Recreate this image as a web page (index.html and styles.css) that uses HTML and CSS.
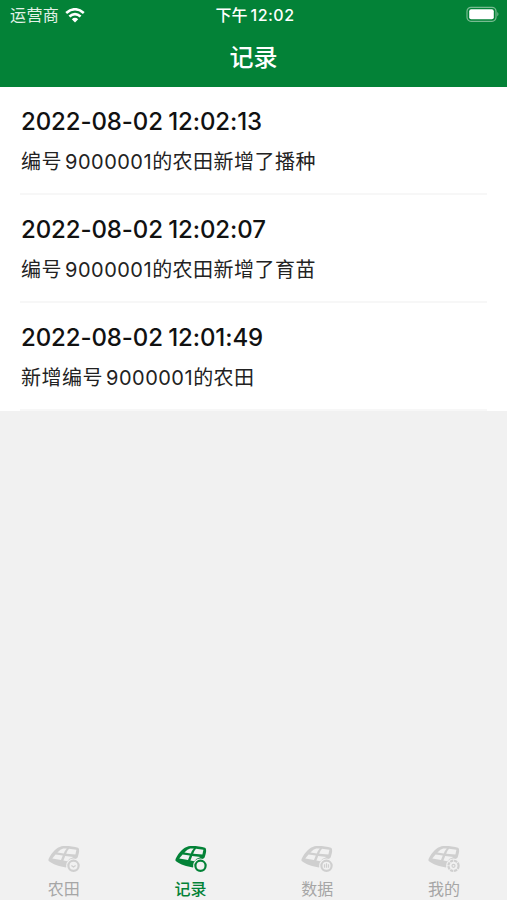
FILE: index.html
```html
<!DOCTYPE html>
<html lang="zh-CN">
<head>
<meta charset="UTF-8">
<title>记录</title>
<link rel="stylesheet" href="styles.css">
</head>
<body>
    <svg class="icon-defs" aria-hidden="true">
        <symbol id="field" viewBox="0 0 32 28">
            <path fill-rule="evenodd" d="M.8 13.4C4 7 8.5 2.6 13.5 1.2C18 .6 25.5 1.3 30 2.7C32 3.5 31 9 29.6 12.4L18 22.5C12 21.8 5 19.5 1.4 16.6C.2 15.5 .2 14.8 .8 13.4Z
                M9.4 7.4Q12.6 3.8 15.2 3.4L18.8 3.6Q16.8 5.6 15.8 8.6Z
                M21 3.8L28.4 4.7L27.4 9.6L18.2 8.7Q19 6 21 3.8Z
                M7.6 9.5L14.8 10.6L13 15L4.2 13.6Z
                M17.2 11L25.5 12Q21 13.5 19.3 16.2L15.4 15.5Z"/>
        </symbol>
    </svg>

    <header class="header">
        <div class="status-bar">
            <div class="carrier">
                <span>运营商</span>
                <svg class="wifi" viewBox="0 0 20 15">
                    <path d="M1.2 5.1Q10 -2.6 18.8 5.1M4.4 8.5Q10 3.6 15.6 8.5"/>
                    <path class="dot" d="M6.8 11.2Q10 8.3 13.2 11.2L10 14.5Z"/>
                </svg>
            </div>
            <div class="clock">下午<span>12:02</span></div>
            <svg class="battery" viewBox="0 0 34 18">
                <rect class="case" x="1" y="1.3" width="29" height="14" rx="4"/>
                <rect class="level" x="3.2" y="3.3" width="24.6" height="10" rx="2"/>
                <path class="level cap" d="M31.3 6.1Q33.6 8.3 31.3 10.5Z"/>
            </svg>
        </div>
        <h1>记录</h1>
    </header>

    <main class="records">
        <div class="record">
            <h2>2022-08-02 12:02:13</h2>
            <p>编号<span class="number">9000001</span>的农田新增了播种</p>
        </div>
        <div class="record">
            <h2>2022-08-02 12:02:07</h2>
            <p>编号<span class="number">9000001</span>的农田新增了育苗</p>
        </div>
        <div class="record">
            <h2>2022-08-02 12:01:49</h2>
            <p>新增编号<span class="number">9000001</span>的农田</p>
        </div>
    </main>

    <nav class="tab-bar">
        <a class="tab">
            <svg viewBox="0 0 32 28">
                <use href="#field"/>
                <circle class="gap" cx="25.5" cy="20.8" r="7.4"/>
                <circle class="badge" cx="25.5" cy="20.8" r="5.1"/>
                <path class="thin" d="M23.4 20.5L25.5 22L27.6 20.5"/>
            </svg>
            <span>农田</span>
        </a>
        <a class="tab active">
            <svg viewBox="0 0 32 28">
                <use href="#field"/>
                <circle class="gap" cx="25.5" cy="20.8" r="7.4"/>
                <circle class="badge" cx="25.5" cy="20.8" r="5.1"/>
            </svg>
            <span>记录</span>
        </a>
        <a class="tab">
            <svg viewBox="0 0 32 28">
                <use href="#field"/>
                <circle class="gap" cx="25.5" cy="20.8" r="7.4"/>
                <circle class="badge" cx="25.5" cy="20.8" r="5.1"/>
                <path class="thin" d="M23.5 19.3V22.8M25.5 18.3V22.8M27.5 19.3V22.8"/>
            </svg>
            <span>数据</span>
        </a>
        <a class="tab">
            <svg viewBox="0 0 32 28">
                <use href="#field"/>
                <circle class="gap" cx="25.5" cy="20.8" r="7.4"/>
                <circle class="badge gear" cx="25.5" cy="20.8" r="5.1"/>
                <circle class="thin" cx="25.5" cy="20.8" r="1.5"/>
            </svg>
            <span>我的</span>
        </a>
    </nav>
</body>
</html>
```
FILE: styles.css
```css
* {
    box-sizing: border-box;
}

body {
    margin: 0;
    height: 100vh;
    display: flex;
    flex-direction: column;
    overflow: hidden;
    background-color: #f1f1f1;
    font-family: Inter, "Noto Sans CJK SC", sans-serif;
}

h1, h2, p {
    margin: 0;
}

.icon-defs {
    display: none;
}

.header {
    height: 87px;
    background-color: #038237;
    color: white;
}

.status-bar {
    height: 30px;
    padding: 0 7px 0 10px;
    display: grid;
    grid-template-columns: 1fr auto 1fr;
    align-items: center;
    font-size: 16px;
    line-height: 30px;
}

.carrier {
    display: flex;
    align-items: center;
    gap: 6px;
    letter-spacing: 0.4px;
    color: #e3f2e8;
}

.wifi {
    width: 20px;
    height: 15px;
    fill: none;
    stroke: white;
    stroke-width: 2.6;
}

.wifi .dot {
    fill: white;
    stroke: none;
}

.clock {
    font-weight: 500;
}

.clock span {
    margin-left: 3px;
    letter-spacing: 0.5px;
}

.battery {
    width: 34px;
    height: 18px;
    justify-self: end;
}

.battery .case {
    fill: none;
    stroke: #78bb91;
    stroke-width: 1.2;
}

.battery .level {
    fill: white;
}

.battery .cap {
    fill: #78bb91;
}

.header h1 {
    padding-top: 1px;
    font-size: 24px;
    font-weight: 500;
    line-height: 54px;
    text-align: center;
}

.records {
    background-color: white;
    padding-left: 20px;
    padding-right: 20px;
}

.record {
    height: 108px;
    padding: 18px 0 0 1px;
    border-bottom: 2px solid #f7f7f7;
    color: #111;
}

.record h2 {
    font-size: 24px;
    font-weight: 500;
    line-height: 34px;
    letter-spacing: -0.1px;
    word-spacing: -1px;
}

.record p {
    margin-top: 8px;
    font-size: 20px;
    line-height: 30px;
    letter-spacing: 0.5px;
    color: #222;
}

.number {
    margin-left: 3px;
}

.tab-bar {
    height: 62px;
    margin-top: auto;
    display: flex;
}

.tab {
    flex: 1;
    padding: 7px 0 0 1px;
    display: flex;
    flex-direction: column;
    align-items: center;
    color: #a6a6a6;
    font-size: 16px;
    line-height: 22px;
}

.tab svg {
    flex-shrink: 0;
    width: 32px;
    height: 28px;
    margin-bottom: 5px;
    fill: #cfcfcf;
    stroke: none;
}

.tab .gap {
    fill: #f1f1f1;
}

.tab .badge {
    fill: none;
    stroke: #cfcfcf;
    stroke-width: 2.2;
}

.tab .thin {
    fill: none;
    stroke: #cfcfcf;
    stroke-width: 1.2;
}

.tab .gear {
    stroke-dasharray: 3.2 0.8;
}

.tab.active {
    color: #038237;
    font-weight: 500;
}

.tab.active svg {
    fill: #038237;
}

.tab.active .badge {
    stroke: #038237;
}
```
